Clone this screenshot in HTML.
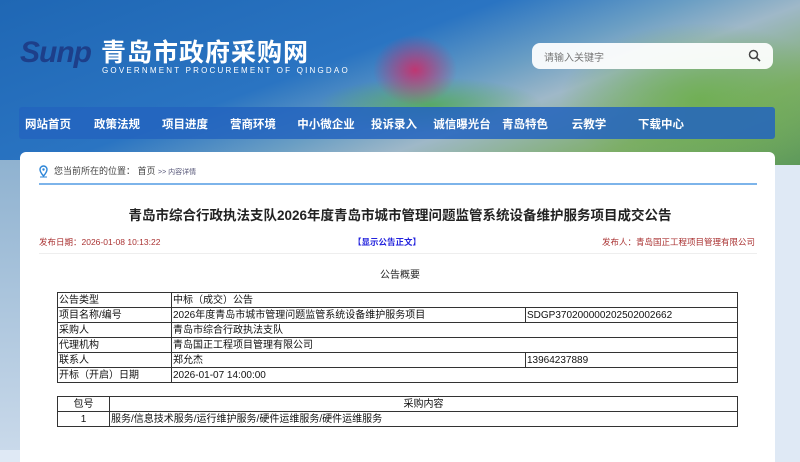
<!DOCTYPE html>
<html><head><meta charset="utf-8"><style>
*{margin:0;padding:0;box-sizing:border-box}
body{width:800px;height:450px;overflow:hidden;position:relative;font-family:"Liberation Sans","Noto Sans CJK SC",sans-serif;background:#dfe9f5}
.bg{position:absolute;left:0;top:0;width:800px;height:165px;background:
radial-gradient(ellipse 60px 50px at 415px 70px,rgba(210,40,100,.85),rgba(210,40,100,0) 70%),
radial-gradient(ellipse 160px 40px at 430px 105px,rgba(80,170,80,.8),rgba(80,170,80,0) 70%),
radial-gradient(ellipse 200px 110px at 700px 100px,rgba(110,175,80,.9),rgba(110,175,80,0) 70%),
linear-gradient(160deg,#1f67b4 0%,#2a74c2 40%,#6a9ec4 55%,#9fb8c8 65%,#7fae6a 82%,#5e9a5a 100%)}
.bgl{position:absolute;left:0;top:160px;width:20px;height:290px;background:linear-gradient(#8fb2d0,#c9d9ea)}
.card{position:absolute;left:20px;top:152px;width:755px;height:310px;background:#fff;border-radius:6px 6px 0 0}
.logo{position:absolute;left:20px;top:36px;font:italic bold 30px "Liberation Sans",sans-serif;color:#1d3f8a;letter-spacing:-1px}
.sitename{position:absolute;left:101px;top:33px;color:#fff;font-size:25px;font-weight:bold;letter-spacing:1px}
.eng{position:absolute;left:102px;top:66px;color:#fff;font-size:8px;letter-spacing:2.2px}
.search{position:absolute;left:532px;top:43px;width:241px;height:26px;background:rgba(255,255,255,.93);border-radius:8px;font-size:10px;color:#777;padding:6px 12px}
.search svg{position:absolute;right:12px;top:6px}
.nav{position:absolute;left:19px;top:107px;width:756px;height:32px;background:rgba(35,100,190,.85);border-radius:3px}
.nav span{position:absolute;top:9px;color:#fff;font-size:11.5px;font-weight:bold;transform:translateX(-50%);white-space:nowrap}
.bc{position:absolute;left:39px;top:164px;font-size:9px;color:#444}
.bc i{font-style:normal;font-size:7px;color:#557}
.line{position:absolute;left:39px;top:183px;width:718px;height:2px;background:#7db4ea}
.title{position:absolute;left:0;width:800px;top:204px;text-align:center;font-size:13.5px;font-weight:bold;color:#222}
.meta{position:absolute;top:236px;font-size:8.5px;color:#a33}
.line2{position:absolute;left:39px;top:253px;width:718px;height:1px;background:#eee}
.sub{position:absolute;left:0;width:800px;top:266px;text-align:center;font-size:10px;color:#222}
table{position:absolute;border-collapse:collapse;font-size:10px;color:#111}
td{border:1px solid #333;padding:0 1px;height:15px;line-height:13px;white-space:nowrap}
</style></head><body>
<div class="bg"></div><div class="bgl"></div>
<div class="logo">Sunp</div>
<div class="sitename">青岛市政府采购网</div>
<div class="eng">GOVERNMENT PROCUREMENT OF QINGDAO</div>
<div class="search">请输入关键字<svg width="13" height="13" viewBox="0 0 13 13"><circle cx="5.5" cy="5.5" r="4" fill="none" stroke="#444" stroke-width="1.5"/><path d="M8.5 8.5L12 12" stroke="#444" stroke-width="1.6"/></svg></div>
<div class="nav">
<span style="left:29px">网站首页</span><span style="left:98px">政策法规</span><span style="left:166px">项目进度</span><span style="left:234px">营商环境</span><span style="left:307px">中小微企业</span><span style="left:375px">投诉录入</span><span style="left:443px">诚信曝光台</span><span style="left:506px">青岛特色</span><span style="left:570px">云教学</span><span style="left:642px">下载中心</span>
</div>
<div class="card"></div>
<svg style="position:absolute;left:39px;top:165px" width="9" height="13" viewBox="0 0 9 13"><path d="M4.5 1A3.5 3.5 0 0 0 1 4.5C1 7 4.5 11 4.5 11S8 7 8 4.5A3.5 3.5 0 0 0 4.5 1z" fill="none" stroke="#2d86d8" stroke-width="1.4"/><circle cx="4.5" cy="4.5" r="1.2" fill="#2d86d8"/><path d="M1 12h7" stroke="#2d86d8"/></svg>
<div class="bc" style="left:54px">您当前所在的位置： 首页 <i>&gt;&gt; 内容详情</i></div>
<div class="line"></div>
<div class="title">青岛市综合行政执法支队2026年度青岛市城市管理问题监管系统设备维护服务项目成交公告</div>
<div class="meta" style="left:39px">发布日期：2026-01-08 10:13:22</div>
<div class="meta" style="left:353px;color:#2222dd;font-weight:bold">【显示公告正文】</div>
<div class="meta" style="right:45px">发布人：青岛国正工程项目管理有限公司</div>
<div class="line2"></div>
<div class="sub">公告概要</div>
<table style="left:57px;top:292px;width:681px">
<tr><td style="width:114px">公告类型</td><td colspan="2">中标（成交）公告</td></tr>
<tr><td>项目名称/编号</td><td style="width:354px">2026年度青岛市城市管理问题监管系统设备维护服务项目</td><td>SDGP370200000202502002662</td></tr>
<tr><td>采购人</td><td colspan="2">青岛市综合行政执法支队</td></tr>
<tr><td>代理机构</td><td colspan="2">青岛国正工程项目管理有限公司</td></tr>
<tr><td>联系人</td><td>郑允杰</td><td>13964237889</td></tr>
<tr><td>开标（开启）日期</td><td colspan="2">2026-01-07 14:00:00</td></tr>
</table>
<table style="left:57px;top:396px;width:681px">
<tr><td style="width:52px;text-align:center">包号</td><td style="text-align:center">采购内容</td></tr>
<tr><td style="text-align:center">1</td><td>服务/信息技术服务/运行维护服务/硬件运维服务/硬件运维服务</td></tr>
</table>
</body></html>
